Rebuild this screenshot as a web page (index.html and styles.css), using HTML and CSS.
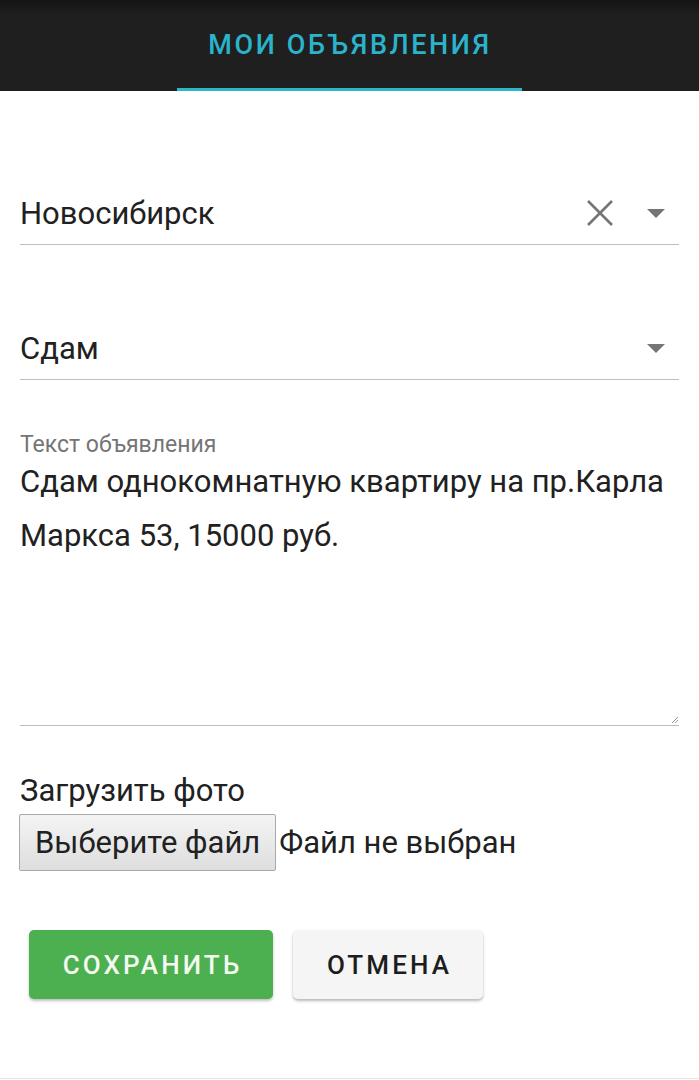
FILE: index.html
```html
<!DOCTYPE html>
<html lang="ru">
<head>
<meta charset="utf-8">
<title>Мои объявления</title>
<link rel="stylesheet" href="styles.css">
</head>
<body>
<div class="page">
  <header class="topbar">
    <div class="tab">МОИ ОБЪЯВЛЕНИЯ</div>
  </header>
  <main class="form">
    <div class="select first">
      <span class="value">Новосибирск</span>
      <span class="icons">
        <svg class="clear" width="28" height="28" viewBox="0 0 28 28"><path d="M2 2 L26 26 M26 2 L2 26" stroke="#757575" stroke-width="2.6" fill="none"/></svg>
        <svg class="caret" width="18" height="9" viewBox="0 0 18 9"><path d="M0 0 H18 L9 9 Z" fill="#757575"/></svg>
      </span>
    </div>
    <div class="select second">
      <span class="value">Сдам</span>
      <span class="icons">
        <svg class="caret" width="18" height="9" viewBox="0 0 18 9"><path d="M0 0 H18 L9 9 Z" fill="#757575"/></svg>
      </span>
    </div>
    <div class="label">Текст объявления</div>
    <div class="textarea">
      <div class="text">Сдам однокомнатную квартиру на пр.Карла Маркса 53, 15000 руб.</div>
      <svg class="grip" width="7" height="7" viewBox="0 0 7 7"><path d="M7 1 L1 7 M7 4 L4 7" stroke="#9a9a9a" stroke-width="1" fill="none"/></svg>
    </div>
    <div class="upload-label">Загрузить фото</div>
    <div class="file-row">
      <span class="file-btn">Выберите файл</span>
      <span class="file-name">Файл не выбран</span>
    </div>
    <div class="actions">
      <span class="btn save">СОХРАНИТЬ</span>
      <span class="btn cancel">ОТМЕНА</span>
    </div>
  </main>
</div>
</body>
</html>
```
FILE: styles.css
```css
* { box-sizing: border-box; }
html, body { margin: 0; padding: 0; background: #fff; }
body { font-family: Roboto, "Noto Sans", sans-serif; color: #212121; }

.page {
  min-height: 1079px;
  border-bottom: 1px solid #e6e6e6;
  display: flex;
  flex-direction: column;
}

.topbar {
  height: 91px;
  background: linear-gradient(#141414 0, #1b1b1b 10px, #1f1f1f 14px, #1f1f1f 100%);
  display: flex;
  justify-content: center;
}
.tab {
  width: 345px;
  height: 91px;
  border-bottom: 3px solid #2bb6ca;
  color: #2bb3cb;
  font-weight: 500;
  font-size: 27px;
  letter-spacing: 2.6px;
  display: flex;
  align-items: center;
  justify-content: center;
  padding-top: 2px;
  padding-left: 1px;
}

.form {
  padding: 0 20px;
  display: flex;
  flex-direction: column;
}

.select {
  height: 65px;
  border-bottom: 1px solid #bdbdbd;
  display: flex;
  align-items: center;
  justify-content: space-between;
  font-size: 31px;
  color: #212121;
  padding-top: 2px;
}
.select.first { margin-top: 89px; }
.select.second { margin-top: 70px; }
.icons {
  display: flex;
  align-items: center;
  padding-right: 14px;
}
.clear { margin-right: 33px; }

.label {
  margin-top: 55px;
  font-size: 23px;
  line-height: 20px;
  color: #757575;
}
.textarea {
  height: 271px;
  border-bottom: 1px solid #bdbdbd;
  position: relative;
}
.text {
  font-size: 31px;
  line-height: 54px;
  color: #212121;
}
.grip {
  position: absolute;
  right: 1px;
  bottom: 2px;
}

.upload-label {
  margin-top: 48px;
  font-size: 31px;
  line-height: 34px;
}
.file-row {
  margin-top: 6px;
  display: flex;
  align-items: center;
  font-size: 31px;
}
.file-btn {
  margin-left: -1px;
  height: 57px;
  padding: 0 15px;
  display: flex;
  align-items: center;
  border: 1px solid #a9a9a9;
  border-radius: 2px;
  background: linear-gradient(#f4f4f4, #dedede);
}
.file-name { margin-left: 3px; }

.actions {
  margin-top: 59px;
  margin-left: 9px;
  display: flex;
  gap: 20px;
}
.btn {
  height: 69px;
  display: flex;
  align-items: center;
  justify-content: center;
  border-radius: 5px;
  font-size: 26px;
  font-weight: 500;
  letter-spacing: 3.1px;
  padding-left: 3px;
}
.save {
  width: 244px;
  background: #4caf50;
  color: #f4faf0;
  box-shadow: 0 2px 3px rgba(0,0,0,0.25);
}
.cancel {
  width: 190px;
  background: #f5f5f5;
  color: #1d1d1d;
  box-shadow: 0 2px 3px rgba(0,0,0,0.28);
}
```
